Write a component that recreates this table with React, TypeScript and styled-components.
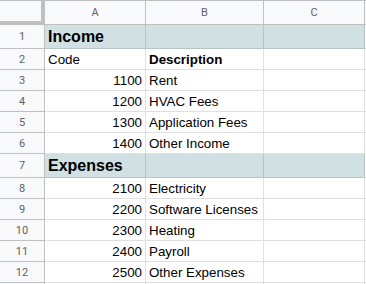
import React from 'react';
import styled, { createGlobalStyle } from 'styled-components';

const GlobalStyle = createGlobalStyle`
  html, body {
    margin: 0;
    padding: 0;
    background: #ffffff;
    overflow: hidden;
  }
  * {
    box-sizing: border-box;
  }
`;

// last column is only partly in view, so it has no visible label
const COLUMNS = [
  { label: 'A', width: 101 },
  { label: 'B', width: 118 },
  { label: 'C', width: 101 },
  { label: '', width: 101 },
];

const Sheet = styled.div`
  width: 366px;
  height: 284px;
  overflow: hidden;
  display: flex;
  flex-direction: column;
  font-family: 'Liberation Sans', Arial, sans-serif;
`;

const Row = styled.div<{ $height: number }>`
  display: flex;
  flex: none;
  height: ${(p) => p.$height}px;
`;

const Corner = styled.div`
  flex: none;
  width: 45px;
  height: 100%;
  background: #f8f9fa;
  border-right: 4px solid #c0c0c0;
  border-bottom: 4px solid #c0c0c0;
  border-top: 1px solid #c0c0c0;
`;

const ColHeader = styled.div<{ $width: number }>`
  flex: none;
  width: ${(p) => p.$width}px;
  height: 100%;
  display: flex;
  align-items: center;
  justify-content: center;
  background: #f8f9fa;
  border-top: 1px solid #c0c0c0;
  border-right: 1px solid #c0c0c0;
  border-bottom: 1px solid #c0c0c0;
  color: #5f6368;
  font-family: Roboto, 'Liberation Sans', sans-serif;
  font-size: 11px;
`;

const RowHeader = styled.div`
  flex: none;
  width: 45px;
  height: 100%;
  display: flex;
  align-items: center;
  justify-content: center;
  background: #f8f9fa;
  border-right: 1px solid #c0c0c0;
  border-bottom: 1px solid #c0c0c0;
  color: #5f6368;
  font-family: Roboto, 'Liberation Sans', sans-serif;
  font-size: 11px;
`;

const Cell = styled.div<{
  $width: number;
  $fill?: boolean;
  $right?: boolean;
  $bold?: boolean;
  $big?: boolean;
}>`
  flex: none;
  width: ${(p) => p.$width}px;
  height: 100%;
  display: flex;
  align-items: flex-end;
  justify-content: ${(p) => (p.$right ? 'flex-end' : 'flex-start')};
  padding: 0 3px 2px 3px;
  background: ${(p) => (p.$fill ? '#d0e0e3' : '#ffffff')};
  border-right: 1px solid rgba(0, 0, 0, 0.12);
  border-bottom: 1px solid rgba(0, 0, 0, 0.12);
  color: #000000;
  font-size: ${(p) => (p.$big ? '16px' : '13.33px')};
  font-weight: ${(p) => (p.$bold ? 700 : 400)};
  white-space: nowrap;
`;

type Line =
  | { kind: 'section'; title: string }
  | { kind: 'entry'; code: string; desc: string; numeric?: boolean; descBold?: boolean };

const LINES: Line[] = [
  { kind: 'section', title: 'Income' },
  { kind: 'entry', code: 'Code', desc: 'Description', descBold: true },
  { kind: 'entry', code: '1100', desc: 'Rent', numeric: true },
  { kind: 'entry', code: '1200', desc: 'HVAC Fees', numeric: true },
  { kind: 'entry', code: '1300', desc: 'Application Fees', numeric: true },
  { kind: 'entry', code: '1400', desc: 'Other Income', numeric: true },
  { kind: 'section', title: 'Expenses' },
  { kind: 'entry', code: '2100', desc: 'Electricity', numeric: true },
  { kind: 'entry', code: '2200', desc: 'Software Licenses', numeric: true },
  { kind: 'entry', code: '2300', desc: 'Heating', numeric: true },
  { kind: 'entry', code: '2400', desc: 'Payroll', numeric: true },
  { kind: 'entry', code: '2500', desc: 'Other Expenses', numeric: true },
];

const App: React.FC = () => {
  return (
    <>
      <GlobalStyle />
      <Sheet>
        <Row $height={25}>
          <Corner />
          {COLUMNS.map((c, j) => (
            <ColHeader key={j} $width={c.width}>
              {c.label}
            </ColHeader>
          ))}
        </Row>
        {LINES.map((line, i) => {
          if (line.kind === 'section') {
            return (
              <Row key={i} $height={24}>
                <RowHeader>{i + 1}</RowHeader>
                {COLUMNS.map((c, j) => (
                  <Cell key={j} $width={c.width} $fill={j < 3} $bold $big={j === 0}>
                    {j === 0 ? line.title : ''}
                  </Cell>
                ))}
              </Row>
            );
          }
          return (
            <Row key={i} $height={21}>
              <RowHeader>{i + 1}</RowHeader>
              <Cell $width={COLUMNS[0].width} $right={line.numeric}>
                {line.code}
              </Cell>
              <Cell $width={COLUMNS[1].width} $bold={line.descBold}>
                {line.desc}
              </Cell>
              <Cell $width={COLUMNS[2].width} />
              <Cell $width={COLUMNS[3].width} />
            </Row>
          );
        })}
        {/* next row, only its top edge shows */}
        <Row $height={21}>
          <RowHeader />
          {COLUMNS.map((c, j) => (
            <Cell key={j} $width={c.width} />
          ))}
        </Row>
      </Sheet>
    </>
  );
};

export default App;
